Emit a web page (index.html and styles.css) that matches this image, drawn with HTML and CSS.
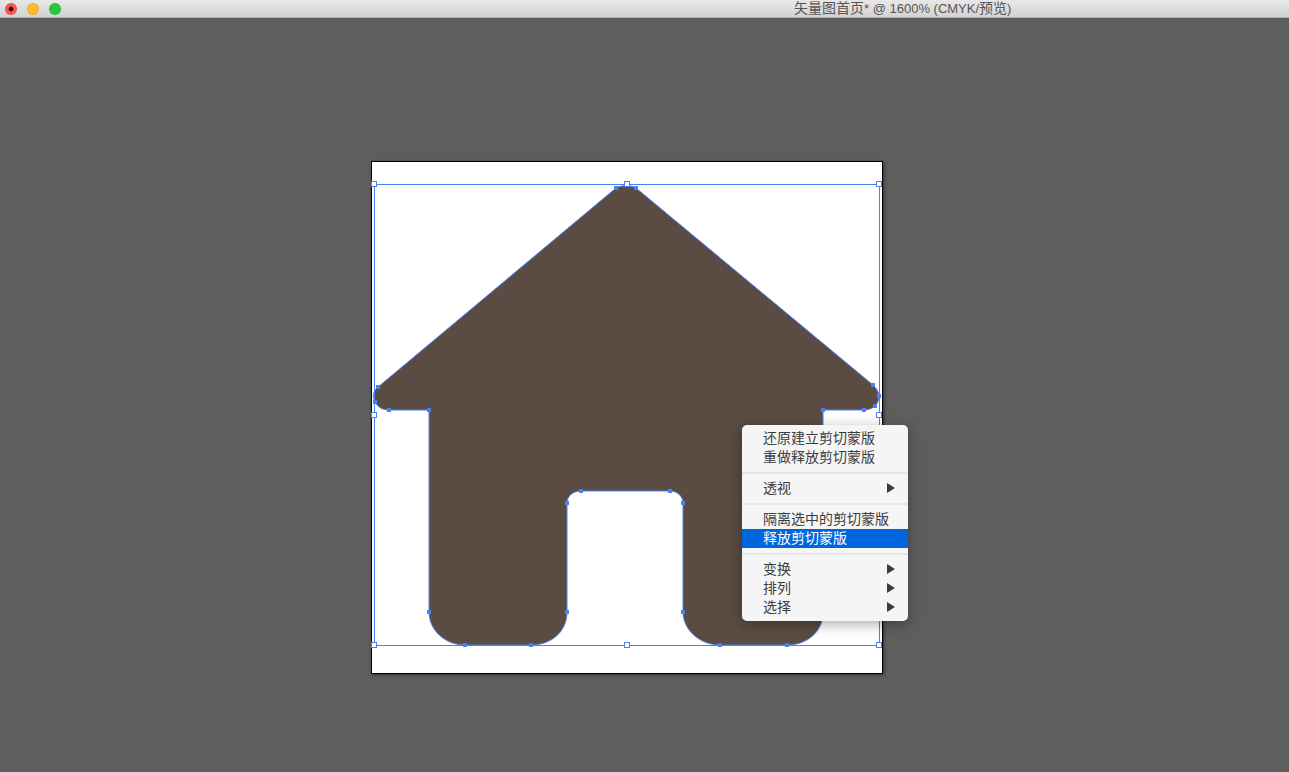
FILE: index.html
```html
<!DOCTYPE html>
<html lang="zh-CN">
	<head>
		<meta charset="UTF-8" />
		<title>矢量图首页</title>
		<link rel="stylesheet" href="styles.css">
	</head>
	<body>
		<header class="titlebar">
			<div class="lights">
				<span class="light light-close"></span>
				<span class="light light-min"></span>
				<span class="light light-max"></span>
			</div>
			<div class="doc-title">矢量图首页<span class="doc-latin">* @ 1600% (CMYK/</span>预览<span class="doc-latin">)</span></div>
		</header>

		<main class="canvas">
			<div class="artboard">
				<svg class="art" viewBox="372 162 510 511" width="510" height="511">
					<path class="house" d="M616 188 C620 185 632 185 636 188 L873 385 C880 391 881 400 875 406 C871 409 868 410 864 410 L823 410 L823 612 C823 632 807 645 787 645 L720 645 C700 645 683 630 683 612 L683 503 C683 496 677 491 670 491 L581 491 C573 491 567 496 567 503 L567 612 C567 632 551 645 531 645 L465 645 C445 645 429 630 429 612 L429 410 L389 410 C382 410 378 407 375 402 C372 396 373 391 378 387 Z" />
					<rect class="bounds" x="374.5" y="184.5" width="505" height="461" />
					<g class="anchors">
						<rect x="614" y="186" width="4" height="4" />
						<rect x="634" y="186" width="4" height="4" />
						<rect x="871" y="383" width="4" height="4" />
						<rect x="877" y="394" width="4" height="4" />
						<rect x="873" y="404" width="4" height="4" />
						<rect x="862" y="408" width="4" height="4" />
						<rect x="821" y="408" width="4" height="4" />
						<rect x="376" y="385" width="4" height="4" />
						<rect x="373" y="400" width="4" height="4" />
						<rect x="387" y="408" width="4" height="4" />
						<rect x="427" y="408" width="4" height="4" />
						<rect x="427" y="610" width="4" height="4" />
						<rect x="463" y="643" width="4" height="4" />
						<rect x="529" y="643" width="4" height="4" />
						<rect x="565" y="610" width="4" height="4" />
						<rect x="565" y="501" width="4" height="4" />
						<rect x="579" y="489" width="4" height="4" />
						<rect x="668" y="489" width="4" height="4" />
						<rect x="681" y="501" width="4" height="4" />
						<rect x="681" y="610" width="4" height="4" />
						<rect x="718" y="643" width="4" height="4" />
						<rect x="785" y="643" width="4" height="4" />
					</g>
					<g class="handles">
						<rect x="371.5" y="181.5" width="5" height="5" />
						<rect x="624.5" y="181.5" width="5" height="5" />
						<rect x="876.5" y="181.5" width="5" height="5" />
						<rect x="371.5" y="412.5" width="5" height="5" />
						<rect x="876.5" y="412.5" width="5" height="5" />
						<rect x="371.5" y="642.5" width="5" height="5" />
						<rect x="624.5" y="642.5" width="5" height="5" />
						<rect x="876.5" y="642.5" width="5" height="5" />
					</g>
				</svg>
			</div>

			<ul class="menu">
				<li class="item">还原建立剪切蒙版</li>
				<li class="item">重做释放剪切蒙版</li>
				<li class="sep"></li>
				<li class="item has-sub">透视</li>
				<li class="sep"></li>
				<li class="item">隔离选中的剪切蒙版</li>
				<li class="item active">释放剪切蒙版</li>
				<li class="sep"></li>
				<li class="item has-sub">变换</li>
				<li class="item has-sub">排列</li>
				<li class="item has-sub">选择</li>
			</ul>
		</main>
	</body>
</html>
```

FILE: styles.css
```css
html,
body {
	height: 100%;
}
body {
	margin: 0;
	display: flex;
	flex-direction: column;
	overflow: hidden;
	background-color: #5e5e5e;
	font-family: "Liberation Sans", "Noto Sans CJK SC", sans-serif;
}

/* window title */
.titlebar {
	flex: none;
	height: 17px;
	display: flex;
	align-items: center;
	background: linear-gradient(#e8e8e8, #d2d2d2);
	border-bottom: 1px solid #aeaeae;
}
.lights {
	display: flex;
	gap: 10px;
	padding-left: 5px;
}
.light {
	width: 12px;
	height: 12px;
	border-radius: 50%;
	box-sizing: border-box;
	border: 1px solid rgba(0, 0, 0, 0.08);
}
.light-close {
	background: radial-gradient(circle, #3a0606 0 1.8px, #fc5753 3px);
}
.light-min {
	background-color: #fdbc2e;
}
.light-max {
	background-color: #27c93f;
}
.doc-title {
	margin-left: 733px;
	font-size: 14px;
	line-height: 17px;
	white-space: nowrap;
	color: #555;
}
.doc-latin {
	font-size: 13px;
}

/* canvas */
.canvas {
	flex: 1;
	position: relative;
}
.artboard {
	position: absolute;
	left: 371px;
	top: 143px;
	width: 510px;
	height: 511px;
	background-color: #fff;
	border: 1px solid #000;
	box-shadow: 1px 1px 3px rgba(0, 0, 0, 0.5);
}
.art {
	display: block;
	overflow: visible;
}
.house {
	fill: #5b4c43;
	stroke: #4a80f5;
	stroke-width: 1;
}
.bounds {
	fill: none;
	stroke: #4a80f5;
	stroke-width: 1;
}
.anchors rect {
	fill: #4a80f5;
}
.handles rect {
	fill: #fff;
	stroke: #4a80f5;
	stroke-width: 1;
}

/* context menu */
.menu {
	position: absolute;
	left: 742px;
	top: 407px;
	width: 166px;
	height: 196px;
	box-sizing: border-box;
	margin: 0;
	padding: 4px 0 5px;
	list-style: none;
	background-color: #f5f5f5;
	border-radius: 5px;
	box-shadow: 0 3px 14px rgba(0, 0, 0, 0.35);
}
.item {
	position: relative;
	height: 19px;
	padding-left: 21px;
	font-size: 14px;
	line-height: 19px;
	color: #3c3c3c;
}
.item.active {
	background-color: #0066de;
	color: #fff;
}
.has-sub::after {
	content: "";
	position: absolute;
	right: 13px;
	top: 4px;
	border-left: 8px solid #3c3c3c;
	border-top: 5px solid transparent;
	border-bottom: 5px solid transparent;
}
.sep {
	height: 2px;
	margin: 5px 0;
	background-color: #e6e6e6;
}
```
